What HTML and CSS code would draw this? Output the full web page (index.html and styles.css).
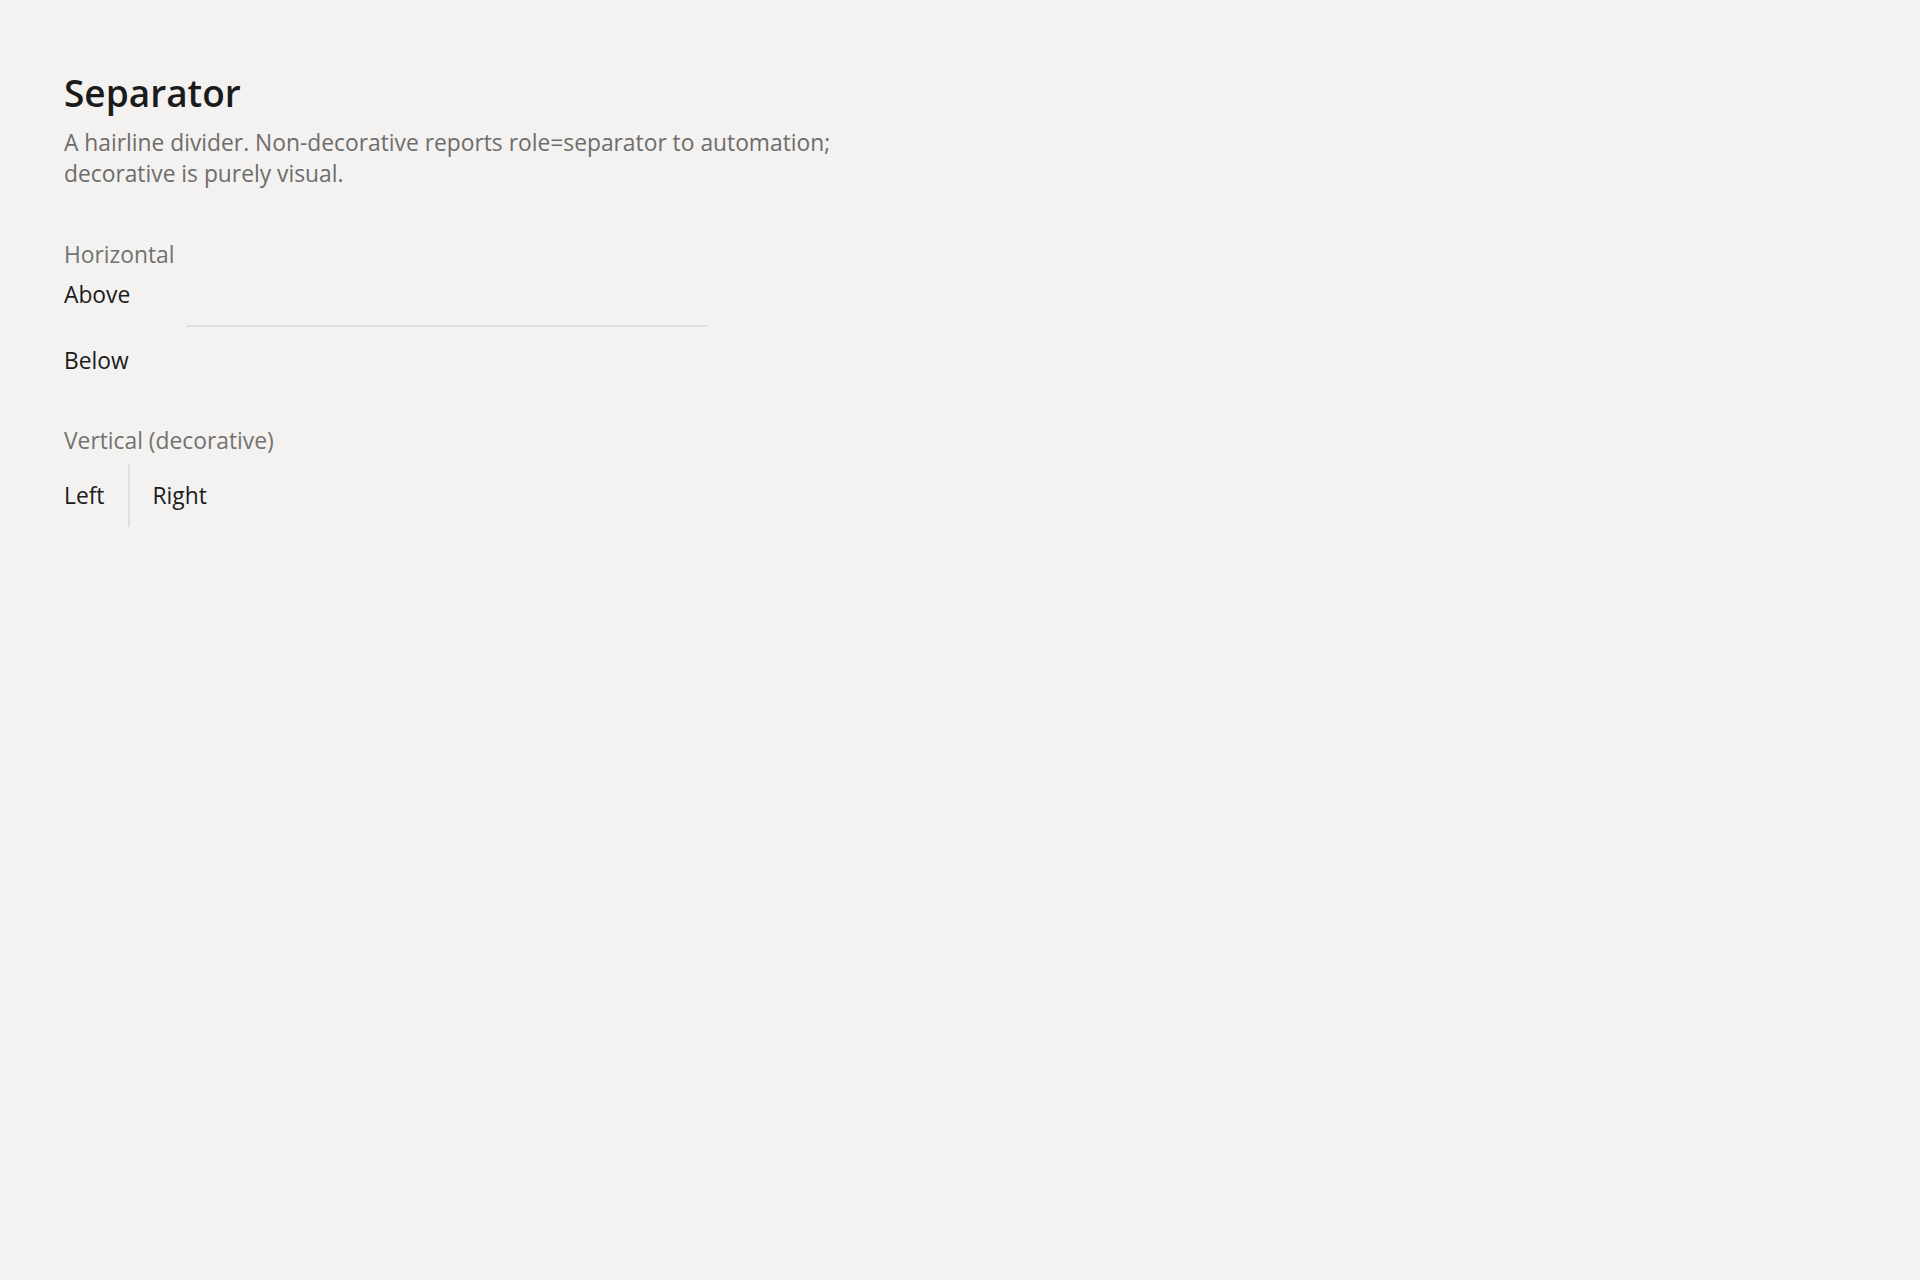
FILE: index.html
```html
<!DOCTYPE html>
<html>
<head>
    <title>Separator</title>
    <link rel="stylesheet" href="styles.css">
</head>
<body>
    <div class="page">
        <h1 class="title">Separator</h1>
        <p class="lead">A hairline divider. Non-decorative reports role=separator to automation;<br>decorative is purely visual.</p>

        <section class="demo">
            <div class="demo-label">Horizontal</div>
            <div class="text">Above</div>
            <div class="separator horizontal" role="separator"></div>
            <div class="text">Below</div>
        </section>

        <section class="demo">
            <div class="demo-label">Vertical (decorative)</div>
            <div class="row">
                <div class="text">Left</div>
                <div class="separator vertical"></div>
                <div class="text">Right</div>
            </div>
        </section>
    </div>
</body>
</html>
```

FILE: styles.css
```css
body {
    margin: 0;
    background: #f3f2f0;
    font-family: "Open Sans", "Noto Sans", sans-serif;
    color: #1b1b1b;
}

.page {
    padding: 68px 64px;
}

.title {
    margin: 0;
    font-size: 37px;
    line-height: 50px;
    font-weight: 600;
    color: #1b1b1b;
}

.lead {
    margin: 9px 0 0;
    font-size: 22.8px;
    line-height: 31px;
    color: #6e6d6c;
}

.demo {
    margin-top: 50px;
}

.demo + .demo {
    margin-top: 49px;
}

.demo-label {
    font-size: 22.8px;
    line-height: 31px;
    color: #737271;
    margin-bottom: 9px;
}

.demo .row {
    margin-top: -1px;
}

.text {
    font-size: 22.8px;
    line-height: 31px;
    color: #1b1b1b;
}

.separator {
    background: #e1dfdd;
}

.separator.horizontal {
    height: 2px;
    width: 522px;
    margin: 15px 0 18px 122px;
}

.row {
    display: flex;
    align-items: center;
    gap: 23px;
    height: 63px;
}

.separator.vertical {
    width: 2px;
    align-self: stretch;
}
```
